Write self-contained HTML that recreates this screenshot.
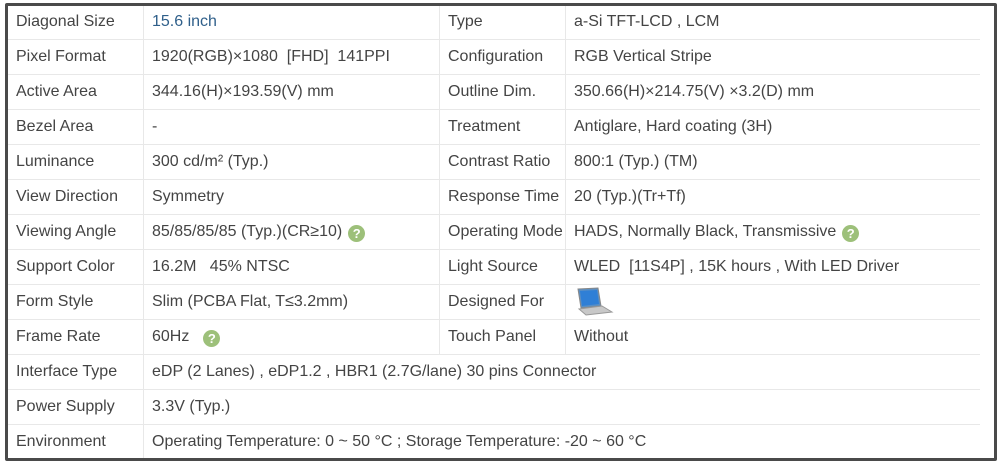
<!DOCTYPE html>
<html><head><style>
body{margin:0;width:1000px;height:463px;background:#fff;overflow:hidden;font-family:"Liberation Sans",Arial,sans-serif;}
.box{position:absolute;left:5px;top:3px;width:986px;height:452px;border:3px solid #4a4a4a;border-radius:2px;background:#fff;overflow:hidden;}
table{position:absolute;left:0px;top:-1px;border-collapse:collapse;width:972px;font-size:16px;color:#444;}
td{height:34px;padding:0 0 0 8px;border-bottom:1px solid #e8e8e8;border-right:1px solid #e8e8e8;white-space:nowrap;vertical-align:middle;}
tr:last-child td{border-bottom:none;}
td.c1{width:127px;}td.c2{width:287px;}td.c3{width:117px;}
td:last-child{border-right:none;}
.q{display:inline-block;width:17px;height:17px;border-radius:50%;background:#9dc07a;color:#fff;font-size:13px;font-weight:bold;text-align:center;line-height:17px;vertical-align:-2px;margin-left:6px;}
.blue{color:#2f5f8a;}
</style></head><body>
<div class="box"><table>
<tr><td class="c1">Diagonal Size</td><td class="c2 blue">15.6 inch</td><td class="c3">Type</td><td>a-Si TFT-LCD , LCM</td></tr>
<tr><td>Pixel Format</td><td>1920(RGB)×1080 &nbsp;[FHD] &nbsp;141PPI</td><td>Configuration</td><td>RGB Vertical Stripe</td></tr>
<tr><td>Active Area</td><td>344.16(H)×193.59(V) mm</td><td>Outline Dim.</td><td>350.66(H)×214.75(V) ×3.2(D) mm</td></tr>
<tr><td>Bezel Area</td><td>-</td><td>Treatment</td><td>Antiglare, Hard coating (3H)</td></tr>
<tr><td>Luminance</td><td>300 cd/m² (Typ.)</td><td>Contrast Ratio</td><td>800:1 (Typ.) (TM)</td></tr>
<tr><td>View Direction</td><td>Symmetry</td><td>Response Time</td><td>20 (Typ.)(Tr+Tf)</td></tr>
<tr><td>Viewing Angle</td><td>85/85/85/85 (Typ.)(CR≥10)<span class="q">?</span></td><td>Operating Mode</td><td>HADS, Normally Black, Transmissive<span class="q">?</span></td></tr>
<tr><td>Support Color</td><td>16.2M &nbsp;&nbsp;45% NTSC</td><td>Light Source</td><td>WLED &nbsp;[11S4P] , 15K hours , With LED Driver</td></tr>
<tr><td>Form Style</td><td>Slim (PCBA Flat, T≤3.2mm)</td><td>Designed For</td><td><svg width="40" height="30" viewBox="0 0 40 30" style="vertical-align:middle"><path d="M4 2 L24 1 L27 19 L7 21 Z" fill="#5a8fc4" stroke="#888"/><path d="M6 4 L23 3 L25 17 L8 19 Z" fill="#2f7fd6"/><path d="M5 22 L28 19 L38 25 L12 28 Z" fill="#c8c8c8" stroke="#999"/></svg></td></tr>
<tr><td>Frame Rate</td><td>60Hz<span class="q" style="margin-left:14px">?</span></td><td>Touch Panel</td><td>Without</td></tr>
<tr><td>Interface Type</td><td colspan="3">eDP (2 Lanes) , eDP1.2 , HBR1 (2.7G/lane) 30 pins Connector</td></tr>
<tr><td>Power Supply</td><td colspan="3">3.3V (Typ.)</td></tr>
<tr><td>Environment</td><td colspan="3">Operating Temperature: 0 ~ 50 °C ; Storage Temperature: -20 ~ 60 °C</td></tr>
</table></div>
</body></html>
